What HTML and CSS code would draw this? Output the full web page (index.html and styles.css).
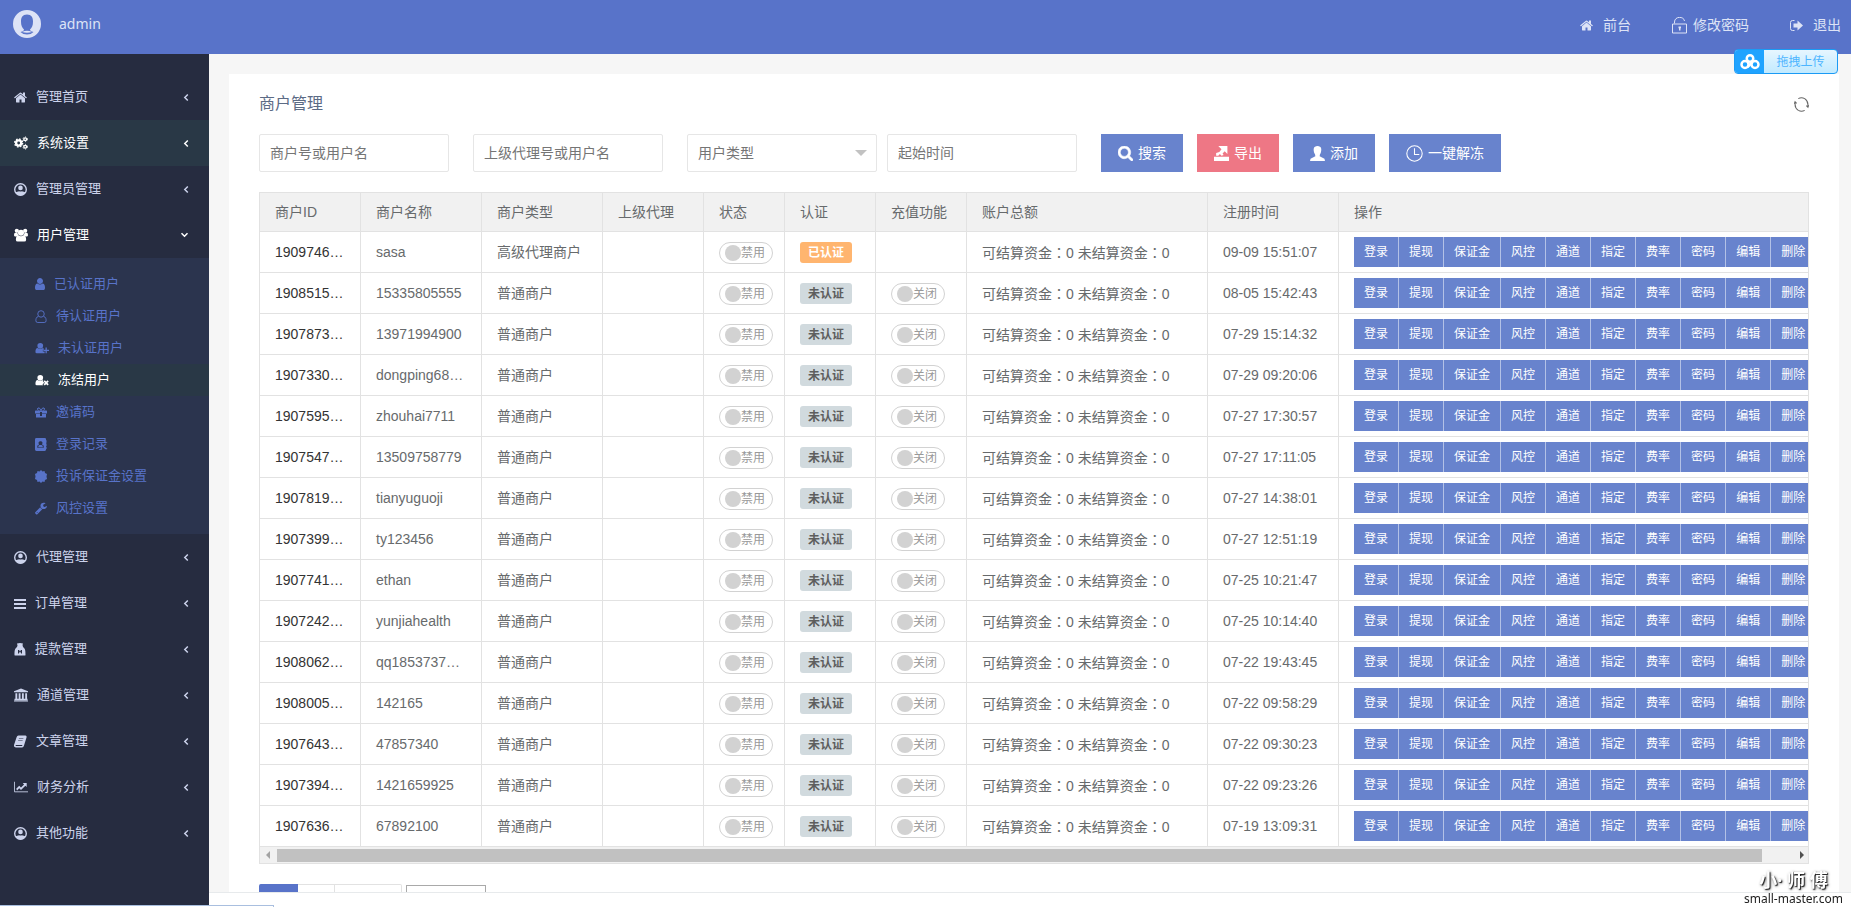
FILE: index.html
```html
<!DOCTYPE html>
<html lang="zh-CN">
<head>
<meta charset="utf-8">
<title>商户管理</title>
<link rel="stylesheet" href="styles.css">
</head>
<body>
<svg class="sprite" aria-hidden="true">
  <symbol id="home" viewBox="64 100 1664 1600"><path d="M1472 992v480q0 26-19 45t-45 19h-384v-384h-256v384h-384q-26 0-45-19t-19-45v-480q0-1 .5-3t.5-3l575-474 575 474q1 2 1 6zm223-69l-62 74q-8 9-21 11h-3q-13 0-21-7l-692-577-692 577q-12 8-24 7-13-2-21-11l-62-74q-8-10-7-23.5t11-21.5l719-599q32-26 76-26t76 26l244 204v-195q0-14 9-23t23-9h192q14 0 23 9t9 23v408l219 182q10 8 11 21.5t-7 23.5z"/></symbol>
  <symbol id="cogs" viewBox="0 0 30 28"><g fill="none" stroke="currentColor"><circle cx="10" cy="14" r="5.5" stroke-width="5"/><circle cx="10" cy="14" r="8.5" stroke-width="3" stroke-dasharray="3.4 3.27"/><circle cx="24" cy="6" r="3" stroke-width="3"/><circle cx="24" cy="6" r="5" stroke-width="2" stroke-dasharray="2.2 3"/><circle cx="24" cy="22" r="3" stroke-width="3"/><circle cx="24" cy="22" r="5" stroke-width="2" stroke-dasharray="2.2 3"/></g></symbol>
  <symbol id="person-circle" viewBox="0 0 28 28"><circle cx="14" cy="14" r="12.5" fill="none" stroke="currentColor" stroke-width="3"/><circle cx="14" cy="10.5" r="5"/><path d="M3 20l4-1q3-1 4-1 3 1 6 0 1 0 4 1l4 1q-4 7-11 7t-11-7z"/></symbol>
  <symbol id="group" viewBox="0 0 30 28"><circle cx="6" cy="5" r="4.500"/><circle cx="24" cy="5" r="4.500"/><circle cx="15" cy="9" r="6.500"/><path d="M0 14q0-5 3-5 3 1 5 1 0 3 2 5-3 0-5 2H2q-2 0-2-3zM30 14q0-5-3-5-3 1-5 1 0 3-2 5 3 0 5 2h3q2 0 2-3zM4 24q0-9 6-9 5 3 10 0 6 0 6 9 0 4-4 4H8q-4 0-4-4z"/></symbol>
  <symbol id="user" viewBox="256 128 1280 1536"><path d="M1536 1399q0 109-62.5 187t-150.5 78h-854q-88 0-150.5-78t-62.5-187q0-85 8.500-160.500t31.500-152 58.500-131 94-89 134.500-34.500q131 128 313 128t313-128q76 0 134.500 34.500t94 89 58.500 131 31.500 152 8.500 160.500zm-256-887q0 159-112.500 271.500t-271.500 112.500-271.500-112.500-112.500-271.500 112.500-271.500 271.500-112.500 271.500 112.500 112.500 271.500z"/></symbol>
  <symbol id="user-line" viewBox="0 0 24 28"><g fill="none" stroke="currentColor" stroke-width="2"><path d="M6 14C1 15 1 21 1 23q0 4 4 4h14q4 0 4-4c0-2 0-8-5-9"/><circle cx="12" cy="8.500" r="7"/></g></symbol>
  <symbol id="user-add" viewBox="0 0 32 26"><circle cx="12" cy="8" r="6.500"/><path d="M1 22q0-9 5-9 6 4 12 0l2 1v3h-2v4h4v4H4q-3 0-3-3zM24 12h3v5h5v3h-5v5h-3v-5h-5v-3h5z"/></symbol>
  <symbol id="user-cut" viewBox="0 0 32 26"><circle cx="12" cy="8" r="6.500"/><path d="M1 22q0-9 5-9 6 4 12 0l1 1-1 2 3 3-4 4 2 2H4q-3 0-3-3z"/><path d="M21 15l9 9M30 15l-9 9" stroke="currentColor" stroke-width="4"/></symbol>
  <symbol id="gift" viewBox="0 0 24 24"><path d="M1 8h9v6H0V9zM14 8h9l1 1v5H14zM2 15h8v7H2zM14 15h8v7h-8zM10 8h4v3h-4zM10 19h4v3h-4z"/><path d="M12 8Q9 1 6 3T7 8M12 8q3-7 6-5t-1 5" fill="none" stroke="currentColor" stroke-width="2"/></symbol>
  <symbol id="book-user" viewBox="0 0 26 28"><path fill-rule="evenodd" d="M3 0h18q3 0 3 3v2h1v5h-1v2h1v5h-1v2h1v5h-1v1q0 3-3 3H3q-3 0-3-3V3q0-3 3-3zm9 7c-5 0-5 5-3 7-4 1-4 3-4 7h14c0-4 0-6-4-7 2-2 2-7-3-7z"/><path d="M7 20q0-5 3-5h4q3 0 3 5z"/></symbol>
  <symbol id="badge" viewBox="0 0 24 26"><path d="M12 0l3 3 4-1 1 4 4 2-1 5 1 5-4 2-1 4-4-1-3 3-3-3-4 1-1-4-4-2 1-5-1-5 4-2 1-4 4 1z"/></symbol>
  <symbol id="wrench" viewBox="80 100 1660 1680"><path d="M448 1472q0-26-19-45t-45-19-45 19-19 45 19 45 45 19 45-19 19-45zm644-420l-682 682q-37 37-90 37-52 0-91-37l-106-108q-38-36-38-90 0-53 38-91l681-681q39 98 114.500 173.500t173.500 114.500zm634-435q0 39-23 106-47 134-164.500 217.500t-258.500 83.500q-185 0-316.500-131.500t-131.500-316.500 131.500-316.500 316.500-131.500q58 0 121.500 16.500t107.500 46.500q16 11 16 28t-16 28l-293 169v224l193 107q5-3 79-48.500t135.500-81 70.500-35.500q15 0 23.500 10t8.500 25z"/></symbol>
  <symbol id="bars" viewBox="0 0 24 24"><path d="M0 3h24v4H0zM0 11h24v4H0zM0 19h24v4H0z"/></symbol>
  <symbol id="bag" viewBox="0 0 24 26"><path fill-rule="evenodd" d="M6 1q6-2 12 0l-1 3 1 4c5 3 5 9 5 16q0 1-2 1H3q-2 0-2-1C1 17 1 11 6 8L7 5zM8 14v7h2v-4l2 3 2-3v4h2v-7h-2l-2 3-2-3z"/></symbol>
  <symbol id="bank" viewBox="0 0 30 28"><path d="M15 0l15 6v2H0V6zM3 10h4v12H3zM10 10h4v12h-4zM17 10h4v12h-4zM24 10h4v12h-4zM1 22h28v3H1zM0 26h30v2H0z"/></symbol>
  <symbol id="book" viewBox="0 0 26 24"><path fill-rule="evenodd" d="M9 0h14q3 1 2 4l-5 16q-1 4-4 4H4q-5-1-4-5L5 4q1-4 4-4zm1 5l-.5 1h9l.5-1zM8.500 9L8 10h9l.5-1zM4 19q-2 2 1 2h11l1-2z"/></symbol>
  <symbol id="chart" viewBox="0 0 32 26"><path d="M1 1v23h31" fill="none" stroke="currentColor" stroke-width="2"/><path d="M5 17l7-7 4 4 7-7-3-3h9v9l-3-3-10 10-4-4-5 5z"/></symbol>
  <symbol id="left" viewBox="0 0 10 14"><path d="M8 2L3 7l5 5" fill="none" stroke="currentColor" stroke-width="2.500"/></symbol>
  <symbol id="down" viewBox="0 0 14 10"><path d="M2 2l5 5 5-5" fill="none" stroke="currentColor" stroke-width="2.500"/></symbol>
  <symbol id="lock" viewBox="0 0 30 34"><path d="M1 14h28v18H1zM5 13V10C5-2 24-2 25 8" fill="none" stroke="currentColor" stroke-width="2"/><path d="M13 19h5v3l-1 1v4h-3v-4l-1-1z"/></symbol>
  <symbol id="logout" viewBox="0 0 26 22"><path d="M9 1H5Q1 1 1 5v12q0 4 4 4h4" fill="none" stroke="currentColor" stroke-width="2"/><path d="M7 7h8V1l11 10-11 10v-6H7z"/></symbol>
  <symbol id="refresh" viewBox="0 0 28 28"><g fill="none" stroke="currentColor" stroke-width="2"><path d="M8 3q6-3 12 0 6 4 6 11v4M20 25q-6 3-12 0-6-4-6-11v-4"/><path d="M23 16l3 3 1-4M5 12L2 9l-1 4"/></g></symbol>
  <symbol id="search" viewBox="64 128 1664 1664"><path stroke="currentColor" stroke-width="60" d="M1216 832q0-185-131.500-316.500t-316.500-131.500-316.500 131.500-131.500 316.500 131.500 316.500 316.500 131.500 316.500-131.500 131.500-316.500zm512 832q0 52-38 90t-90 38q-54 0-90-38l-343-342q-179 124-399 124-143 0-273.500-55.500t-225-150-150-225-55.500-273.500 55.500-273.500 150-225 225-150 273.500-55.500 273.500 55.500 225 150 150 225 55.500 273.500q0 220-124 399l343 343q37 37 37 90z"/></symbol>
  <symbol id="export" viewBox="0 0 28 28"><path d="M0 20h28v8H0zM8 0h17v15l-5-5-4 4 2 3-4 1-3-3-3 3H4v-5l6-2 4-5z"/></symbol>
  <symbol id="person" viewBox="0 0 28 28"><path d="M14 0C6 0 6 7 8 13q2 3 2 6l-9 5-1 4h28l-1-4-9-5q0-3 2-6C22 7 22 0 14 0z"/></symbol>
  <symbol id="clock" viewBox="0 0 32 32"><g fill="none" stroke="currentColor" stroke-width="2"><circle cx="16" cy="16" r="14.500"/><path d="M16 6v12h9"/></g></symbol>
  <symbol id="avatar" viewBox="0 0 56 56"><path fill-rule="evenodd" d="M28 0a28 28 0 1 1 0 56 28 28 0 0 1 0-56zM28 9c-9 0-12 6-12 14 0 8 2 12 6 16q0 3-7 5 5 5 13 5t13-5q-7-2-7-5c4-4 6-8 6-16 0-8-3-14-12-14z"/><path d="M18 44q10-5 20 0-10 3-20 0z"/></symbol>
  <symbol id="clover" viewBox="0 0 40 32"><g fill="none" stroke="currentColor" stroke-width="5"><circle cx="20" cy="9" r="6.500"/><circle cx="10" cy="21" r="7"/><circle cx="30" cy="21" r="7"/><path d="M15 26l10-10"/></g></symbol>
</svg>

<header class="topbar">
  <a class="brand" href="#"><svg class="avatar"><use href="#avatar"/></svg><span>admin</span></a>
  <nav class="toplinks">
    <a href="#"><svg class="w13"><use href="#home"/></svg>前台</a>
    <a class="tight" href="#"><svg class="w15 lock"><use href="#lock"/></svg>修改密码</a>
    <a href="#"><svg class="w13"><use href="#logout"/></svg>退出</a>
  </nav>
  <button class="upload" type="button"><span class="upload-mark"><svg><use href="#clover"/></svg></span><span class="upload-text">拖拽上传</span></button>
</header>

<div class="shell">
  <nav class="sidebar">
    <a class="item" href="#"><svg class="w13"><use href="#home"/></svg>管理首页<svg class="arrow"><use href="#left"/></svg></a>
    <a class="item hover" href="#"><svg class="w14"><use href="#cogs"/></svg>系统设置<svg class="arrow"><use href="#left"/></svg></a>
    <a class="item" href="#"><svg class="w13"><use href="#person-circle"/></svg>管理员管理<svg class="arrow"><use href="#left"/></svg></a>
    <a class="item open" href="#"><svg class="w14"><use href="#group"/></svg>用户管理<svg class="arrow"><use href="#down"/></svg></a>
    <div class="submenu">
      <a href="#"><svg class="w10"><use href="#user"/></svg>已认证用户</a>
      <a href="#"><svg class="w12"><use href="#user-line"/></svg>待认证用户</a>
      <a href="#"><svg class="w14"><use href="#user-add"/></svg>未认证用户</a>
      <a class="current" href="#"><svg class="w14"><use href="#user-cut"/></svg>冻结用户</a>
      <a href="#"><svg class="w12"><use href="#gift"/></svg>邀请码</a>
      <a href="#"><svg class="w12"><use href="#book-user"/></svg>登录记录</a>
      <a href="#"><svg class="w12"><use href="#badge"/></svg>投诉保证金设置</a>
      <a href="#"><svg class="w12"><use href="#wrench"/></svg>风控设置</a>
    </div>
    <a class="item" href="#"><svg class="w13"><use href="#person-circle"/></svg>代理管理<svg class="arrow"><use href="#left"/></svg></a>
    <a class="item" href="#"><svg class="w12"><use href="#bars"/></svg>订单管理<svg class="arrow"><use href="#left"/></svg></a>
    <a class="item" href="#"><svg class="w12"><use href="#bag"/></svg>提款管理<svg class="arrow"><use href="#left"/></svg></a>
    <a class="item" href="#"><svg class="w14"><use href="#bank"/></svg>通道管理<svg class="arrow"><use href="#left"/></svg></a>
    <a class="item" href="#"><svg class="w13"><use href="#book"/></svg>文章管理<svg class="arrow"><use href="#left"/></svg></a>
    <a class="item" href="#"><svg class="w14"><use href="#chart"/></svg>财务分析<svg class="arrow"><use href="#left"/></svg></a>
    <a class="item" href="#"><svg class="w13"><use href="#person-circle"/></svg>其他功能<svg class="arrow"><use href="#left"/></svg></a>
  </nav>

  <div class="main">
    <main class="content">
      <section class="card">
        <div class="card-head">
          <h1>商户管理</h1>
          <button class="refresh" type="button" aria-label="刷新"><svg><use href="#refresh"/></svg></button>
        </div>
        <form class="filters">
          <input class="field" type="text" placeholder="商户号或用户名" aria-label="商户号或用户名">
          <input class="field" type="text" placeholder="上级代理号或用户名" aria-label="上级代理号或用户名">
          <div class="pair">
            <div class="select-box"><select class="field" aria-label="用户类型"><option>用户类型</option></select></div>
            <input class="field" type="text" placeholder="起始时间" aria-label="起始时间">
          </div>
          <div class="actions">
            <button class="btn" type="button"><svg><use href="#search"/></svg>搜索</button>
            <button class="btn danger" type="button"><svg><use href="#export"/></svg>导出</button>
            <button class="btn" type="button"><svg><use href="#person"/></svg>添加</button>
            <button class="btn" type="button"><svg class="big"><use href="#clock"/></svg>一键解冻</button>
          </div>
        </form>
        <div class="table-box">
          <table>
            <colgroup><col class="c-id"><col class="c-name"><col class="c-name"><col class="c-id"><col class="c-state"><col class="c-flag"><col class="c-flag"><col class="c-sum"><col class="c-time"><col></colgroup>
            <thead><tr><th>商户ID</th><th>商户名称</th><th>商户类型</th><th>上级代理</th><th>状态</th><th>认证</th><th>充值功能</th><th>账户总额</th><th>注册时间</th><th>操作</th></tr></thead>
            <tbody id="rows"></tbody>
          </table>
          <div class="scrollbar"><span class="tri prev"></span><span class="thumb"></span><span class="tri next"></span></div>
        </div>
        <div class="pager">
          <button class="page on" type="button" aria-label="第一页"></button><button class="page" type="button" aria-label="下一页"></button><button class="page wide" type="button" aria-label="末页"></button>
          <select class="limit" aria-label="每页条数"></select>
        </div>
      </section>
    </main>
    <footer class="footer"></footer>
  </div>
</div>
<div class="status"></div>
<div class="watermark"><span class="mark-cn">小· 师 傅</span><span class="mark-en">small-master.com</span></div>
<script src="app.js"></script>
</body>
</html>
```
FILE: styles.css
```css
* { box-sizing: border-box; }
body {
  margin: 0;
  height: 100vh;
  overflow: hidden;
  display: flex;
  flex-direction: column;
  font: 14px/20px "Liberation Sans", "Noto Sans CJK SC", sans-serif;
  color: #676a6c;
  background: #fff;
}
a { color: inherit; text-decoration: none; }
button, input, select { font: inherit; color: inherit; }
svg { fill: currentColor; flex: none; }
.sprite { position: absolute; width: 0; height: 0; }
.w10 { width: 10px; height: 12px; }
.w12 { width: 12px; height: 13px; }
.w13 { width: 13px; height: 13px; }
.w14 { width: 14px; height: 14px; }
.w15 { width: 15px; height: 14px; }

.topbar {
  position: relative;
  flex: none;
  height: 54px;
  padding: 0 10px 4px 13px;
  display: flex;
  align-items: center;
  justify-content: space-between;
  background: #5873c9;
  color: #dde3f6;
}
.brand { display: flex; align-items: center; gap: 18px; padding-bottom: 2px; font-family: "Noto Sans", sans-serif; }
.avatar { width: 28px; height: 28px; }
.toplinks { display: flex; gap: 41px; }
.toplinks a { display: flex; align-items: center; gap: 10px; }
.toplinks .tight { gap: 6px; }
.toplinks .lock { height: 17px; }
.upload {
  position: absolute;
  z-index: 2;
  top: 49px;
  right: 13px;
  width: 104px;
  height: 25px;
  padding: 0;
  display: flex;
  overflow: hidden;
  border: 1px solid #1b9bf5;
  border-radius: 4px;
  background: linear-gradient(#e6f6ff, #c2eaff);
  font-size: 12px;
  line-height: 24px;
  color: #4db5ff;
}
.upload-mark { width: 29px; height: 23px; display: flex; align-items: center; justify-content: center; background: #1fa3ff; color: #fff; }
.upload-mark svg { width: 20px; height: 16px; }
.upload-text { flex: 1; }

.shell { flex: 1; min-height: 0; display: flex; }
.sidebar { flex: none; width: 209px; padding-top: 20px; overflow: hidden; background: #262c40; color: #ccd3ec; font-size: 13px; }
.item { display: flex; align-items: center; gap: 9px; height: 46px; padding: 0 20px 0 14px; }
.item.hover { background: #293846; color: #fff; }
.item.open { color: #fff; }
.item .arrow { width: 6px; height: 9px; margin-left: auto; }
.item.open .arrow { width: 9px; height: 6px; }
.submenu { padding: 10px 0; background: #2b344e; color: #5873c9; }
.submenu a { display: flex; align-items: center; gap: 9px; height: 32px; padding-left: 35px; }
.submenu .current { background: #293846; color: #fff; }

.main { flex: 1; min-width: 0; display: flex; flex-direction: column; }
.content { flex: 1; min-height: 0; overflow: hidden; padding: 20px 12px 0 20px; background: #f6f6f6; }
.footer { flex: none; height: 15px; border-top: 1px solid #e7eaec; background: #fff; }
.card { min-height: 100%; padding: 20px 30px; background: #fff; }
.card-head { display: flex; align-items: center; justify-content: space-between; height: 20px; margin-bottom: 20px; color: #5c6b85; }
h1 { margin: 0; font-size: 16px; font-weight: 400; }
.refresh { padding: 0; border: 0; background: none; display: flex; color: #666; }
.refresh svg { width: 15px; height: 15px; }

.filters { display: flex; gap: 24px; margin-bottom: 20px; }
.field { display: block; width: 190px; height: 38px; padding: 0 10px; border: 1px solid #e6e6e6; border-radius: 2px; background: #fff; color: #757575; }
.field::placeholder { color: #757575; opacity: 1; }
.pair { display: flex; gap: 10px; }
.select-box { position: relative; }
.select-box .field { appearance: none; }
.select-box::after { content: ""; position: absolute; top: 16px; right: 10px; border: 6px solid transparent; border-top-color: #c2c2c2; border-bottom: 0; }
.actions { display: flex; gap: 14px; }
.btn { display: flex; align-items: center; gap: 5px; height: 38px; padding: 0 17px; border: 0; background: #6883cd; color: #fff; white-space: nowrap; }
.btn svg { width: 15px; height: 15px; }
.btn svg.big { width: 17px; height: 17px; }
.danger { background: #ee7785; }

.table-box { overflow: hidden; border: 1px solid #e2e2e2; }
table { table-layout: fixed; width: calc(100% + 31px); border-collapse: separate; border-spacing: 0; }
.c-id { width: 101px; }
.c-name { width: 121px; }
.c-state { width: 81px; }
.c-flag { width: 91px; }
.c-sum { width: 241px; }
.c-time { width: 131px; }
th, td { height: 41px; padding: 0 15px; overflow: hidden; text-overflow: ellipsis; white-space: nowrap; text-align: left; font-weight: 400; border: solid #e2e2e2; border-width: 0 1px 1px 0; }
th { height: 39px; background: #f1f1f1; }
td:first-child { color: #333; }
td:last-child { text-overflow: clip; }
.colon { font-family: "Noto Sans CJK TC", sans-serif; }
.switch { display: flex; align-items: center; width: 54px; height: 22px; margin-top: 2px; padding-left: 5px; border: 1px solid #d2d2d2; border-radius: 11px; font-size: 12px; color: #999; }
.switch input { appearance: none; width: 16px; height: 16px; margin: 0; border-radius: 50%; background: #d2d2d2; }
.tag { display: block; width: 52px; height: 21px; border-radius: 3px; background: #d1dade; color: #5e5e5e; font-size: 12px; font-weight: 700; line-height: 22px; text-align: center; }
.tag.ok { background: #ffb56f; color: #fff; }
.ops { display: flex; }
.ops button { flex: none; height: 30px; padding: 0 10px; border: 0; border-left: 1px solid #b3c1e6; background: #6883cd; color: #fff; font-size: 12px; }
.ops button:first-child { border-left: 0; }

.scrollbar { display: flex; align-items: center; height: 16px; background: #f1f1f1; }
.thumb { flex: 1; height: 13px; margin: 0 38px 0 7px; background: #c1c1c1; }
.tri { border: 4px solid transparent; }
.prev { margin-left: 2px; border-right-color: #a3a3a3; }
.next { border-left-color: #505050; }

.pager { display: flex; padding-top: 20px; }
.page { width: 37px; height: 28px; border: 1px solid #e2e2e2; border-left: 0; background: #fff; }
.page.on { width: 39px; border-color: #5873c9; border-radius: 2px 0 0 2px; background: #5873c9; }
.page.wide { width: 67px; border-radius: 0 2px 2px 0; }
.limit { appearance: none; width: 80px; height: 28px; margin: 1px 0 0 4px; border: 1px solid #a9a9a9; background: #fff; }

.status { position: fixed; left: 0; bottom: 0; width: 274px; height: 2px; border: 1px solid #a9bfdf; border-width: 1px 1px 0 0; background: #fff; }
.watermark { position: fixed; right: 8px; bottom: 0; display: flex; flex-direction: column; align-items: center; color: #222; font-family: "Noto Sans", "Noto Sans CJK SC", sans-serif; }
.mark-cn { font-size: 18px; line-height: 22px; font-weight: 700; color: #fff; text-shadow: 1px 1px 1px #222, 1px 1px 3px #555; }
.mark-en { font-size: 12px; line-height: 16px; }
```
FILE: app.js
```js
const merchants = [
  ["1909746001", "sasa", "09-09 15:51:07"],
  ["1908515001", "15335805555", "08-05 15:42:43"],
  ["1907873001", "13971994900", "07-29 15:14:32"],
  ["1907330001", "dongping68001", "07-29 09:20:06"],
  ["1907595001", "zhouhai7711", "07-27 17:30:57"],
  ["1907547001", "13509758779", "07-27 17:11:05"],
  ["1907819001", "tianyuguoji", "07-27 14:38:01"],
  ["1907399001", "ty123456", "07-27 12:51:19"],
  ["1907741001", "ethan", "07-25 10:21:47"],
  ["1907242001", "yunjiahealth", "07-25 10:14:40"],
  ["1908062001", "qq1853737001", "07-22 19:43:45"],
  ["1908005001", "142165", "07-22 09:58:29"],
  ["1907643001", "47857340", "07-22 09:30:23"],
  ["1907394001", "1421659925", "07-22 09:23:26"],
  ["1907636001", "67892100", "07-19 13:09:31"]
];
const ops = ["登录", "提现", "保证金", "风控", "通道", "指定", "费率", "密码", "编辑", "删除"]
  .map(name => `<button type="button">${name}</button>`).join("");
const toggle = text => `<label class="switch"><input type="checkbox">${text}</label>`;
const colon = `<span class="colon" lang="zh-TW">：</span>`;

document.getElementById("rows").innerHTML = merchants.map(([id, name, time], i) => {
  const agent = i === 0;
  return `<tr><td>${id}</td><td>${name}</td><td>${agent ? "高级代理商户" : "普通商户"}</td><td></td>
    <td>${toggle("禁用")}</td>
    <td><span class="tag${agent ? " ok" : ""}">${agent ? "已认证" : "未认证"}</span></td>
    <td>${agent ? "" : toggle("关闭")}</td>
    <td>可结算资金${colon}0 未结算资金${colon}0</td><td>${time}</td>
    <td><div class="ops">${ops}</div></td></tr>`;
}).join("");
```
